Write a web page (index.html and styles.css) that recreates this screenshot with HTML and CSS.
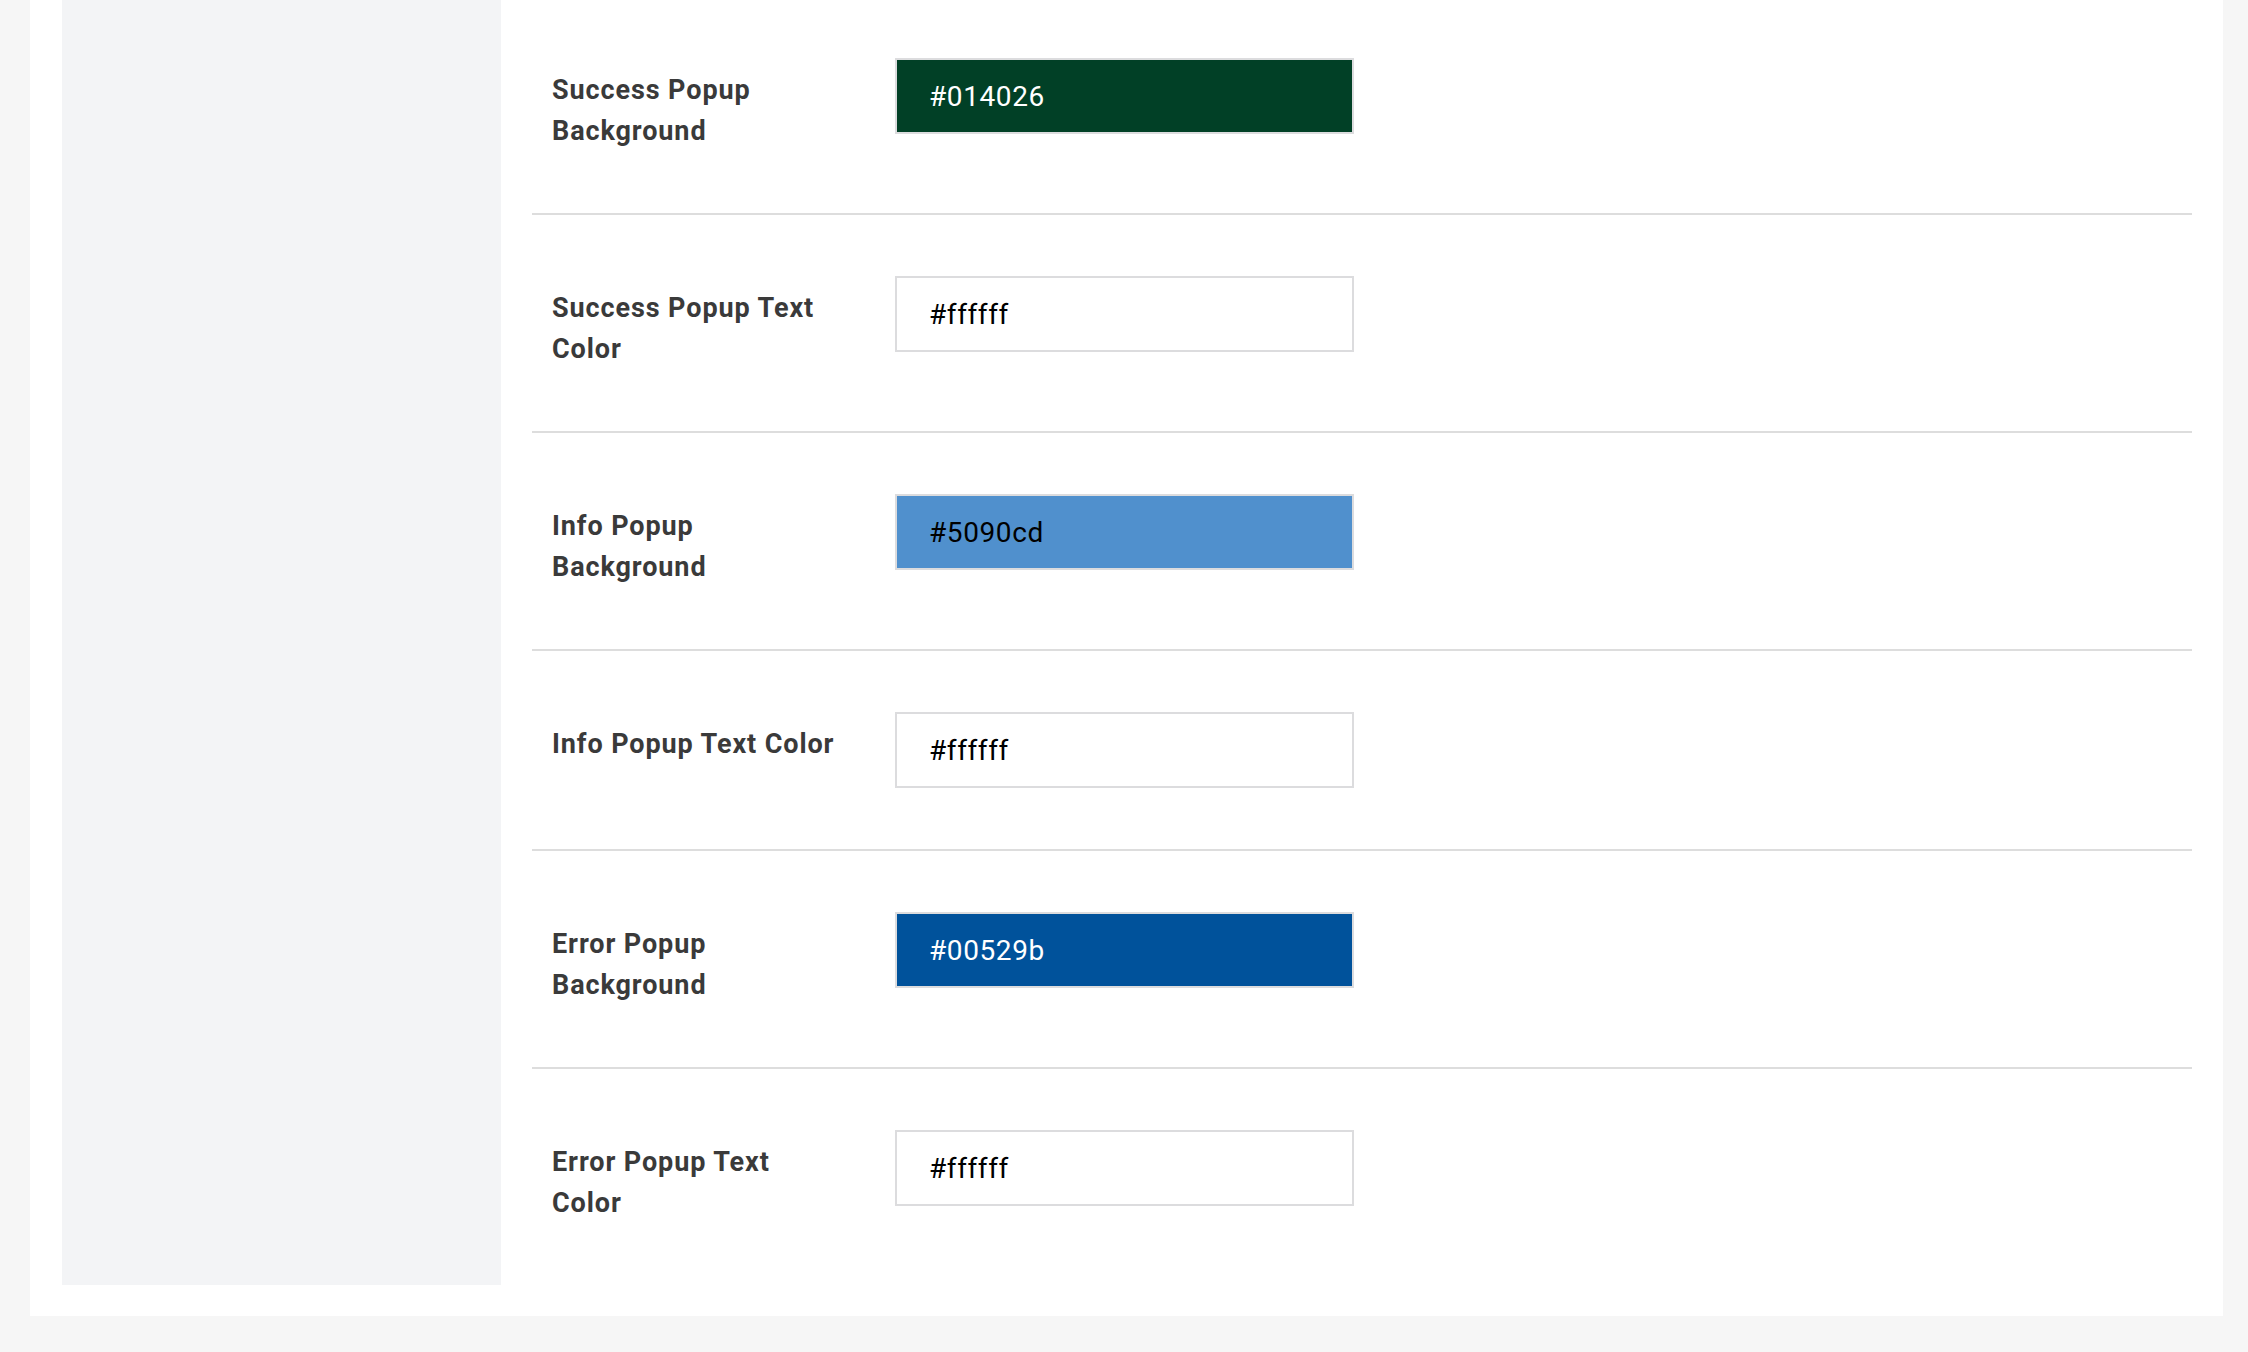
FILE: index.html
```html
<!DOCTYPE html>
<html lang="en">
  <head>
    <meta charset="UTF-8" />
    <meta name="viewport" content="width=device-width, initial-scale=1.0" />
    <title>Popup colors</title>
    <link rel="stylesheet" href="styles.css">
  </head>
  <body>
    <div class="settings-card">
      <aside class="settings-sidebar"></aside>
      <form class="settings-form">
        <div class="form-row">
          <label class="form-label" for="success-bg">Success Popup Background</label>
          <input type="text" id="success-bg" class="color-input color-dark" value="#014026" style="background-color: #014026" />
        </div>
        <div class="form-row">
          <label class="form-label" for="success-text">Success Popup Text Color</label>
          <input type="text" id="success-text" class="color-input" value="#ffffff" style="background-color: #ffffff" />
        </div>
        <div class="form-row">
          <label class="form-label" for="info-bg">Info Popup Background</label>
          <input type="text" id="info-bg" class="color-input" value="#5090cd" style="background-color: #5090cd" />
        </div>
        <div class="form-row">
          <label class="form-label" for="info-text">Info Popup Text Color</label>
          <input type="text" id="info-text" class="color-input" value="#ffffff" style="background-color: #ffffff" />
        </div>
        <div class="form-row">
          <label class="form-label" for="error-bg">Error Popup Background</label>
          <input type="text" id="error-bg" class="color-input color-dark" value="#00529b" style="background-color: #00529b" />
        </div>
        <div class="form-row">
          <label class="form-label" for="error-text">Error Popup Text Color</label>
          <input type="text" id="error-text" class="color-input" value="#ffffff" style="background-color: #ffffff" />
        </div>
      </form>
    </div>
  </body>
</html>
```

FILE: styles.css
```css
/* Reset */
* {
  box-sizing: border-box;
}

body {
  margin: 0;
  padding: 0 25px 36px 30px;
  background-color: #f6f6f6;
  font-family: Roboto, "Liberation Sans", sans-serif;
}

/* Layout */
.settings-card {
  display: flex;
  gap: 31px;
  margin-top: -3px;
  padding: 0 31px 31px 32px;
  background-color: #fff;
}

.settings-sidebar {
  flex: 0 0 439px;
  background-color: #f3f4f6;
}

.settings-form {
  flex: 1;
}

/* Rows */
.form-row {
  display: flex;
  align-items: flex-start;
  padding: 61px 20px 61px;
  border-bottom: 2px solid #dddddd;
}

.form-row:last-child {
  border-bottom: none;
}

.form-label {
  flex: 0 0 343px;
  padding: 12px 55px 0 0;
  font-size: 27px;
  font-weight: 700;
  line-height: 41px;
  letter-spacing: 0.9px;
  color: #3a3a3a;
}

.color-input {
  width: 459px;
  height: 76px;
  padding: 0 32px;
  border: 2px solid #dcdcde;
  border-radius: 0;
  font-family: Roboto, "Liberation Sans", sans-serif;
  font-size: 28px;
  letter-spacing: 0.6px;
  color: #000;
  outline: none;
}

.color-dark {
  color: #fff;
}
```
